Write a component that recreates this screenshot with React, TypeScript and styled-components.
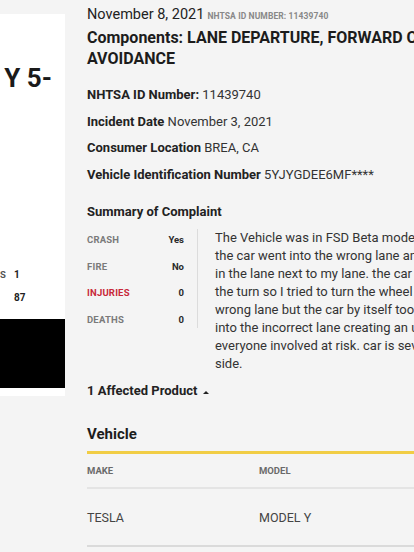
import styled, { createGlobalStyle } from "styled-components";

const GlobalStyle = createGlobalStyle`
  html, body {
    margin: 0;
    padding: 0;
    background: #f4f4f4;
    overflow: hidden;
  }
  body {
    font-family: Roboto, "Liberation Sans", Arial, sans-serif;
    color: #212121;
  }
`;

const Page = styled.div`
  display: flex;
  align-items: flex-start;
  width: 640px;
  height: 552px;
`;

/* left column, scrolled partly out of view */
const SideCard = styled.aside`
  width: 65px;
  flex: 0 0 65px;
  margin-top: 14px;
  background: #fff;
  overflow: hidden;
  display: flex;
  flex-direction: column;
  align-items: flex-end;
  padding-bottom: 8px;
`;

const SideTitle = styled.div`
  white-space: nowrap;
  font-size: 26px;
  font-weight: 700;
  line-height: 30px;
  padding-right: 13px;
  margin-top: 49px;
  color: #1a1a1a;
`;

const Stats = styled.div`
  display: grid;
  grid-template-columns: auto 30px;
  column-gap: 8px;
  row-gap: 11px;
  margin-top: 176px;
  margin-right: 21px;
  font-size: 9.5px;
  line-height: 12px;
  font-weight: 700;
  white-space: nowrap;
`;

const StatLabel = styled.span`
  color: #555;
  letter-spacing: 0.2px;
`;

const StatValue = styled.span`
  color: #222;
  font-size: 10px;
`;

const MediaBlock = styled.div`
  align-self: stretch;
  height: 69px;
  margin-top: 15px;
  background: #000;
`;

const Main = styled.main`
  flex: 1;
  padding-left: 22px;
`;

const DateLine = styled.div`
  font-size: 14.5px;
  line-height: 20px;
  margin-top: 5px;
  color: #222;
`;

const SmallId = styled.span`
  font-size: 8.5px;
  font-weight: 700;
  color: #888;
  margin-left: 3px;
  letter-spacing: 0.1px;
`;

const Title = styled.h1`
  margin: 1px 0 0;
  font-size: 16px;
  line-height: 21px;
  font-weight: 700;
  color: #1c1c1c;
  width: 440px;
`;

const Details = styled.div`
  margin-top: 17px;
  display: flex;
  flex-direction: column;
  gap: 8.7px;
`;

const DetailRow = styled.div`
  font-size: 13px;
  line-height: 18px;
  color: #333;
  white-space: nowrap;

  b {
    font-weight: 700;
    color: #222;
  }
`;

const SectionHeading = styled.h2<{ $top: number }>`
  margin: ${(p) => p.$top}px 0 0;
  font-size: 13px;
  line-height: 18px;
  font-weight: 700;
  color: #222;
  display: flex;
  align-items: center;
  gap: 6px;
`;

const Caret = styled.span`
  width: 0;
  height: 0;
  border-left: 3px solid transparent;
  border-right: 3px solid transparent;
  border-bottom: 3.5px solid #222;
  margin-top: 2px;
`;

const SummaryBody = styled.div`
  display: flex;
  align-items: flex-start;
  margin-top: 8px;
`;

const FactTable = styled.div`
  display: grid;
  grid-template-columns: 1fr auto;
  row-gap: 13.5px;
  width: 97px;
  padding: 4px 13px 2px 0;
  border-right: 1px solid #dcdcdc;
  font-size: 9.5px;
  line-height: 13px;
  font-weight: 700;
`;

const FactLabel = styled.span<{ $alert?: boolean }>`
  color: ${(p) => (p.$alert ? "#c8283a" : "#7a7a7a")};
  letter-spacing: 0.2px;
`;

const FactValue = styled.span`
  color: #2a2a2a;
  text-align: right;
`;

const Complaint = styled.p`
  margin: 0;
  padding-left: 17px;
  font-size: 13px;
  line-height: 18px;
  color: #333;
  white-space: nowrap;
`;

const VehicleHeading = styled.h3`
  margin: 24px 0 0;
  font-size: 15px;
  line-height: 20px;
  font-weight: 700;
  color: #1c1c1c;
  padding-bottom: 7px;
  border-bottom: 3px solid #f1cd45;
`;

const Table = styled.div`
  display: grid;
  grid-template-columns: 172px 172px 172px;
`;

const HeadCell = styled.div`
  font-size: 9.5px;
  font-weight: 700;
  color: #6a6a6a;
  line-height: 12px;
  padding: 11px 0 10px;
  border-bottom: 2px solid #e4e4e4;
`;

const BodyCell = styled.div`
  font-size: 12.5px;
  color: #444;
  line-height: 16px;
  padding: 21px 0 19px;
  border-bottom: 2px solid #dadada;
`;

const complaintLines = [
  "The Vehicle was in FSD Beta mode and while taking a left turn",
  "the car went into the wrong lane and I was almost hit by another driver",
  "in the lane next to my lane. the car gave an alert 1/2 way through",
  "the turn so I tried to turn the wheel to avoid it from going into the",
  "wrong lane but the car by itself took control and forced itself",
  "into the incorrect lane creating an unsafe maneuver putting",
  "everyone involved at risk. car is severely damaged on the driver",
  "side.",
];

const facts = [
  { label: "CRASH", value: "Yes" },
  { label: "FIRE", value: "No" },
  { label: "INJURIES", value: "0", alert: true },
  { label: "DEATHS", value: "0" },
];

export default function App() {
  return (
    <>
      <GlobalStyle />
      <Page>
        <SideCard>
          <SideTitle>2021 TESLA MODEL Y 5-</SideTitle>
          <Stats>
            <StatLabel>INVESTIGATIONS</StatLabel>
            <StatValue>1</StatValue>
            <StatLabel>COMPLAINTS</StatLabel>
            <StatValue>87</StatValue>
          </Stats>
          <MediaBlock />
        </SideCard>

        <Main>
          <DateLine>
            November 8, 2021
            <SmallId>NHTSA ID NUMBER: 11439740</SmallId>
          </DateLine>
          <Title>Components: LANE DEPARTURE, FORWARD COLLISION AVOIDANCE</Title>

          <Details>
            <DetailRow>
              <b>NHTSA ID Number:</b> 11439740
            </DetailRow>
            <DetailRow>
              <b>Incident Date</b> November 3, 2021
            </DetailRow>
            <DetailRow>
              <b>Consumer Location</b> BREA, CA
            </DetailRow>
            <DetailRow>
              <b>Vehicle Identification Number</b> 5YJYGDEE6MF****
            </DetailRow>
          </Details>

          <SectionHeading $top={19}>Summary of Complaint</SectionHeading>
          <SummaryBody>
            <FactTable>
              {facts.map((f) => [
                <FactLabel key={f.label} $alert={f.alert}>
                  {f.label}
                </FactLabel>,
                <FactValue key={f.label + "-v"}>{f.value}</FactValue>,
              ])}
            </FactTable>
            <Complaint>
              {complaintLines.map((line, i) => (
                <span key={i}>
                  {line}
                  {i < complaintLines.length - 1 && <br />}
                </span>
              ))}
            </Complaint>
          </SummaryBody>

          <SectionHeading $top={9}>
            1 Affected Product <Caret />
          </SectionHeading>

          <VehicleHeading>Vehicle</VehicleHeading>
          <Table>
            <HeadCell>MAKE</HeadCell>
            <HeadCell>MODEL</HeadCell>
            <HeadCell>YEAR</HeadCell>
            <BodyCell>TESLA</BodyCell>
            <BodyCell>MODEL Y</BodyCell>
            <BodyCell>2021</BodyCell>
          </Table>
        </Main>
      </Page>
    </>
  );
}
